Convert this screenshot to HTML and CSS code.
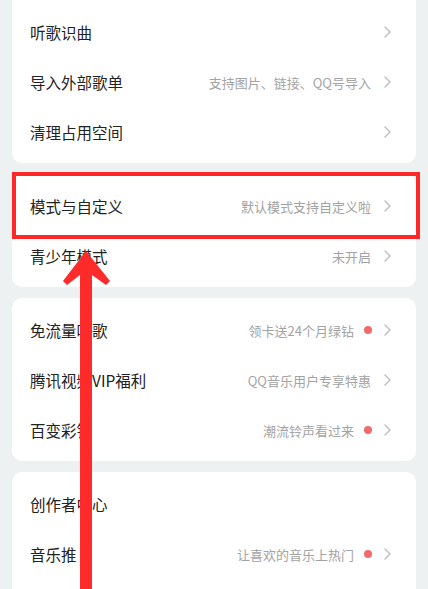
FILE: index.html
```html
<!DOCTYPE html>
<html lang="zh-CN">
<head>
    <meta charset="UTF-8">
    <meta name="viewport" content="width=device-width, initial-scale=1.0">
    <title>设置</title>
    <link rel="stylesheet" href="styles.css">
</head>
<body>
    <div class="page">
        <div class="card card-top">
            <div class="row">
                <span class="label">听歌识曲</span>
                <span class="extra">
                    <svg class="chevron" width="7" height="12" viewBox="0 0 7 12"><polyline points="1,1 6,6 1,11"/></svg>
                </span>
            </div>
            <div class="row">
                <span class="label">导入外部歌单</span>
                <span class="extra">
                    <span class="hint">支持图片、链接、QQ号导入</span>
                    <svg class="chevron" width="7" height="12" viewBox="0 0 7 12"><polyline points="1,1 6,6 1,11"/></svg>
                </span>
            </div>
            <div class="row">
                <span class="label">清理占用空间</span>
                <span class="extra">
                    <svg class="chevron" width="7" height="12" viewBox="0 0 7 12"><polyline points="1,1 6,6 1,11"/></svg>
                </span>
            </div>
        </div>

        <div class="card">
            <div class="row">
                <span class="label">模式与自定义</span>
                <span class="extra">
                    <span class="hint">默认模式支持自定义啦</span>
                    <svg class="chevron" width="7" height="12" viewBox="0 0 7 12"><polyline points="1,1 6,6 1,11"/></svg>
                </span>
            </div>
            <div class="row">
                <span class="label">青少年模式</span>
                <span class="extra">
                    <span class="hint">未开启</span>
                    <svg class="chevron" width="7" height="12" viewBox="0 0 7 12"><polyline points="1,1 6,6 1,11"/></svg>
                </span>
            </div>
        </div>

        <div class="card">
            <div class="row">
                <span class="label">免流量听歌</span>
                <span class="extra">
                    <span class="hint">领卡送24个月绿钻</span>
                    <span class="dot"></span>
                    <svg class="chevron" width="7" height="12" viewBox="0 0 7 12"><polyline points="1,1 6,6 1,11"/></svg>
                </span>
            </div>
            <div class="row">
                <span class="label">腾讯视频VIP福利</span>
                <span class="extra">
                    <span class="hint">QQ音乐用户专享特惠</span>
                    <svg class="chevron" width="7" height="12" viewBox="0 0 7 12"><polyline points="1,1 6,6 1,11"/></svg>
                </span>
            </div>
            <div class="row">
                <span class="label">百变彩铃</span>
                <span class="extra">
                    <span class="hint">潮流铃声看过来</span>
                    <span class="dot"></span>
                    <svg class="chevron" width="7" height="12" viewBox="0 0 7 12"><polyline points="1,1 6,6 1,11"/></svg>
                </span>
            </div>
        </div>

        <div class="card">
            <div class="row">
                <span class="label">创作者中心</span>
            </div>
            <div class="row">
                <span class="label">音乐推</span>
                <span class="extra">
                    <span class="hint">让喜欢的音乐上热门</span>
                    <span class="dot"></span>
                    <svg class="chevron" width="7" height="12" viewBox="0 0 7 12"><polyline points="1,1 6,6 1,11"/></svg>
                </span>
            </div>
            <div class="row"></div>
        </div>

        <!-- annotation drawn over the screenshot -->
        <div class="mark-box"></div>
        <svg class="mark-arrow" width="428" height="589" viewBox="0 0 428 589">
            <polygon points="86,251 110,281 106,285 92,275 92,589 80,589 80,275 67,285 63,281"/>
        </svg>
    </div>
</body>
</html>
```

FILE: styles.css
```css
body {
    margin: 0;
    background-color: #eef1f1;
    font-family: "Noto Sans CJK SC", "Noto Sans", sans-serif;
    overflow: hidden;
}
.page {
    position: relative;
    height: 589px;
    overflow: hidden;
}
.card {
    margin: 0 12px 11px;
    padding: 7px 0 6px;
    background-color: #fff;
    border-radius: 10px;
}
.card-top {
    border-top-left-radius: 0;
    border-top-right-radius: 0;
}
.row {
    display: flex;
    align-items: center;
    justify-content: space-between;
    height: 50px;
    padding: 0 25px 0 18px;
}
.label {
    font-size: 15.5px;
    color: #222;
}
.extra {
    display: flex;
    align-items: center;
}
.hint {
    font-size: 13px;
    color: #a3a3a3;
    margin-right: 13px;
}
.dot {
    width: 8px;
    height: 8px;
    border-radius: 50%;
    background-color: #f06b6b;
    margin: 0 12px 0 -3px;
}
.chevron polyline {
    fill: none;
    stroke: #bdbdbd;
    stroke-width: 1.4;
    stroke-linecap: round;
    stroke-linejoin: round;
}
.mark-box {
    position: absolute;
    left: 12px;
    top: 172px;
    width: 400px;
    height: 59px;
    border: 4.5px solid #ff2828;
}
.mark-arrow {
    position: absolute;
    left: 0;
    top: 0;
}
.mark-arrow polygon {
    fill: #ff2a2a;
}
```
